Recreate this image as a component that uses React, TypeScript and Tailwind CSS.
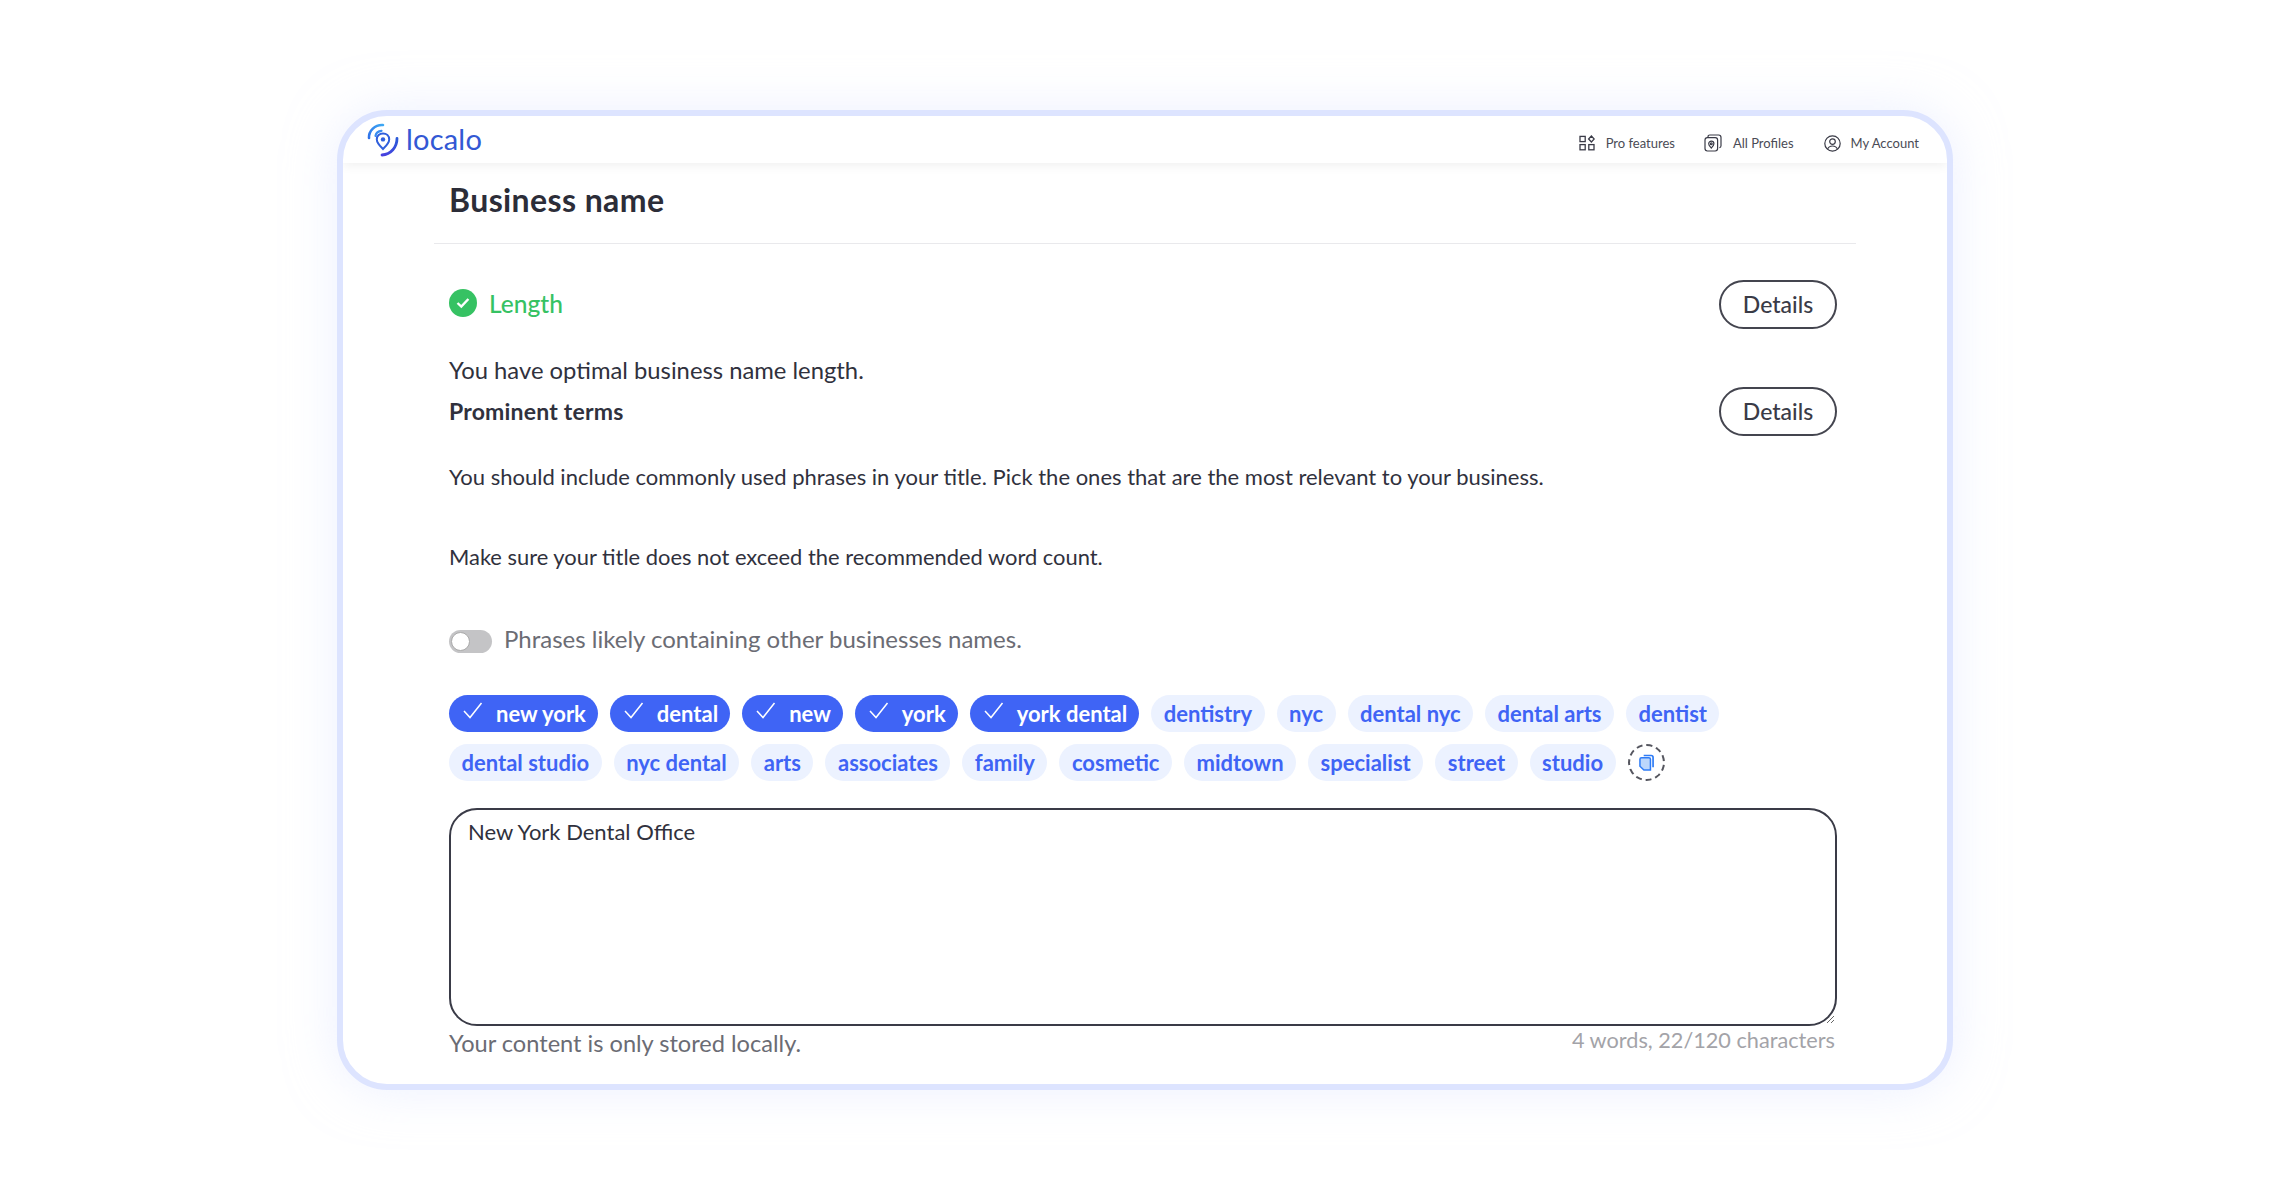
import React from "react";

const selected = ["new york", "dental", "new", "york", "york dental"];
const row1 = ["dentistry", "nyc", "dental nyc", "dental arts", "dentist"];
const row2 = ["dental studio", "nyc dental", "arts", "associates", "family", "cosmetic", "midtown", "specialist", "street", "studio"];

function Logo() {
  return (
    <svg width="32" height="34" viewBox="0 0 32 34" fill="none" className="shrink-0">
      <defs>
        <linearGradient id="lgTop" x1="0" y1="14" x2="18" y2="0" gradientUnits="userSpaceOnUse">
          <stop stopColor="#2f6fe8" />
          <stop offset="1" stopColor="#3fb0f5" />
        </linearGradient>
        <linearGradient id="lgBottom" x1="30" y1="14" x2="14" y2="32" gradientUnits="userSpaceOnUse">
          <stop stopColor="#2a5bd8" />
          <stop offset="1" stopColor="#4a3fe0" />
        </linearGradient>
      </defs>
      <path d="M2 15C1.6 8 8 1.4 16 2" stroke="url(#lgTop)" strokeWidth="2.6" strokeLinecap="round" />
      <path d="M8.5 13C9 9.8 11.5 8 14.5 7.8" stroke="#3a8df0" strokeWidth="2.2" strokeLinecap="round" />
      <path d="M30 15.5C30 24 24 31.5 15 32" stroke="url(#lgBottom)" strokeWidth="2.8" strokeLinecap="round" />
      <path d="M16 26C13 23 9.8 20 9.8 16.4C9.8 12.8 12.6 10.4 16 10.4C19.4 10.4 22.2 12.8 22.2 16.4C22.2 20 19 23 16 26Z" stroke="#3160dc" strokeWidth="2" />
      <circle cx="16" cy="16.4" r="2.2" fill="#3160dc" />
    </svg>
  );
}

function ProIcon() {
  return (
    <svg width="16" height="16" viewBox="0 0 16 16" fill="none" stroke="#3a3b47" strokeWidth="1.3">
      <rect x="1" y="1.4" width="5.2" height="5.2" />
      <rect x="1" y="9.6" width="5.2" height="5.2" />
      <rect x="9.8" y="9.6" width="5.2" height="5.2" />
      <path d="M12.4 1L15.2 4L12.4 7L9.6 4Z" />
    </svg>
  );
}

function ProfilesIcon() {
  return (
    <svg width="18" height="18" viewBox="0 0 18 18" fill="none" stroke="#3a3b47" strokeWidth="1.2">
      <rect x="1" y="3.6" width="12.6" height="13.4" rx="2.4" />
      <path d="M4 3.4V2.8C4 1.8 4.7 1 5.8 1H14.6C16 1 17 2 17 3.4V11.8C17 12.9 16.2 13.6 15.4 13.6" />
      <path d="M7.3 14C6 12.6 4.7 11.4 4.7 9.7C4.7 8.2 5.9 7.1 7.3 7.1C8.7 7.1 9.9 8.2 9.9 9.7C9.9 11.4 8.6 12.6 7.3 14Z" />
      <circle cx="7.3" cy="9.7" r="0.9" />
    </svg>
  );
}

function AccountIcon() {
  return (
    <svg width="17" height="17" viewBox="0 0 17 17" fill="none" stroke="#3a3b47" strokeWidth="1.2">
      <circle cx="8.5" cy="8.5" r="7.7" />
      <circle cx="8.5" cy="6.6" r="2.8" />
      <path d="M3.6 14.2C4.4 11.9 6.3 11 8.5 11C10.7 11 12.6 11.9 13.4 14.2" />
    </svg>
  );
}

function NavItem({ icon, label, className }: { icon: React.ReactNode; label: string; className: string }) {
  return (
    <div className={`flex items-center ${className}`}>
      {icon}
      <span className="text-[13px] leading-none text-[#4a4b55]">{label}</span>
    </div>
  );
}

function DetailsButton() {
  return (
    <button className="w-[118px] h-[49px] rounded-full border-2 border-[#44454f] text-[23px] font-medium text-[#3a3b47] bg-white">
      Details
    </button>
  );
}

function Check() {
  return (
    <svg width="20" height="18" viewBox="0 0 20 18" fill="none" stroke="white" strokeWidth="1.5" className="shrink-0">
      <path d="M1 9L7 15.5L18.5 1" />
    </svg>
  );
}

function SelectedChip({ label }: { label: string }) {
  return (
    <div className="h-[37px] rounded-full bg-[#3f64f5] flex items-center pl-[14px] pr-[12px] gap-[13px] text-white text-[22px] font-bold">
      <span className="-mt-[5px]"><Check /></span>
      <span className="leading-none">{label}</span>
    </div>
  );
}

function Chip({ label }: { label: string }) {
  return (
    <div className="h-[37px] rounded-full bg-[#ecf2ff] flex items-center px-[12.5px] text-[#3f64f5] text-[22px] font-bold leading-none">
      {label}
    </div>
  );
}

function CopyChip() {
  return (
    <div className="w-[37px] h-[37px] rounded-full border-2 border-dashed border-[#55565f] flex items-center justify-center">
      <svg width="15" height="18" viewBox="0 0 16 18" fill="none">
        <path d="M5 1H13C14.2 1 15 1.8 15 3V13.5" stroke="#2f7cf6" strokeWidth="1.8" />
        <path d="M1 5C1 4 1.6 3.4 2.6 3.4H10.6C11.6 3.4 12.2 4 12.2 5V16.4H5.2L1 12.4Z" fill="#bcd7fc" stroke="#2f7cf6" strokeWidth="1.6" />
      </svg>
    </div>
  );
}

export default function App() {
  return (
    <div className="h-[1200px] bg-white pt-[110px] font-['Lato','Noto_Sans',sans-serif] text-[#30313d]">
      <div className="ml-[337px] w-[1616px] h-[980px] rounded-[50px] border-[6px] border-[#dde4ff] bg-white shadow-[0_0_50px_rgba(221,228,255,0.55)] overflow-hidden">
        <header className="h-[47px] flex items-center shadow-[0_3px_10px_rgba(0,0,0,0.06)] relative">
          <div className="ml-[24px] flex items-center gap-[7px]">
            <Logo />
            <span className="text-[29px] leading-none text-[#3358d4] tracking-[0.2px] -mt-[3px]">localo</span>
          </div>
          <div className="ml-auto mr-[28px] mt-[7px] flex items-center">
            <NavItem icon={<ProIcon />} label="Pro features" className="gap-[11px] mr-[29px]" />
            <NavItem icon={<ProfilesIcon />} label="All Profiles" className="gap-[11px] mr-[30px]" />
            <NavItem icon={<AccountIcon />} label="My Account" className="gap-[10px]" />
          </div>
        </header>

        <main className="ml-[91px] w-[1422px]">
          <h1 className="h-[81px] pl-[15px] pt-[17px] text-[32px] leading-[40px] font-bold tracking-[0.4px] text-[#2c2d38] border-b border-[#e9e9ec]">
            Business name
          </h1>

          <div className="pl-[15px] pr-[19px]">
            <div className="mt-[36px] flex items-center justify-between">
              <div className="flex items-center gap-[12px]">
                <span className="w-[28px] h-[28px] rounded-full bg-[#36c263] flex items-center justify-center -mt-[3px]">
                  <svg width="14" height="12" viewBox="0 0 14 12" fill="none" stroke="white" strokeWidth="2.4">
                    <path d="M1.5 6L5.3 9.6L12.4 2" />
                  </svg>
                </span>
                <span className="text-[24.5px] font-medium text-[#36c263]">Length</span>
              </div>
              <DetailsButton />
            </div>

            <p className="mt-[27px] text-[23.8px] leading-[28px]">You have optimal business name length.</p>

            <div className="mt-[3px] flex items-center justify-between">
              <span className="text-[23px] font-bold tracking-[0.2px]">Prominent terms</span>
              <DetailsButton />
            </div>

            <p className="mt-[27px] text-[22px] leading-[28px]">
              You should include commonly used phrases in your title. Pick the ones that are the most relevant to your business.
            </p>
            <p className="mt-[52px] text-[21.9px] leading-[28px]">
              Make sure your title does not exceed the recommended word count.
            </p>

            <div className="mt-[55px] h-[28px] flex items-center gap-[12px]">
              <span className="w-[43px] h-[23px] rounded-full bg-[#c4c4c6] p-[2px] mt-[3px]">
                <span className="block w-[19px] h-[19px] rounded-full bg-white border border-[#aaa]" />
              </span>
              <span className="text-[24px] text-[#6b6c74] leading-none -mt-[2px]">
                Phrases likely containing other businesses names.
              </span>
            </div>

            <div className="mt-[41px] flex gap-[12px]">
              {selected.map((s) => <SelectedChip key={s} label={s} />)}
              {row1.map((s) => <Chip key={s} label={s} />)}
            </div>
            <div className="mt-[12px] flex gap-[12px]">
              {row2.map((s) => <Chip key={s} label={s} />)}
              <CopyChip />
            </div>

            <textarea
              defaultValue="New York Dental Office"
              className="mt-[27px] block w-full h-[218px] rounded-[28px] border-2 border-[#3a3b47] px-[17px] py-[8px] text-[22px] leading-[28px] outline-none"
            />

            <div className="flex justify-between">
              <span className="mt-[3px] text-[23.6px] leading-[28px] text-[#6b6c74]">Your content is only stored locally.</span>
              <span className="text-[21.7px] leading-[28px] text-[#a3a3a8] mr-[2px]">4 words, 22/120 characters</span>
            </div>
          </div>
        </main>
      </div>
    </div>
  );
}
